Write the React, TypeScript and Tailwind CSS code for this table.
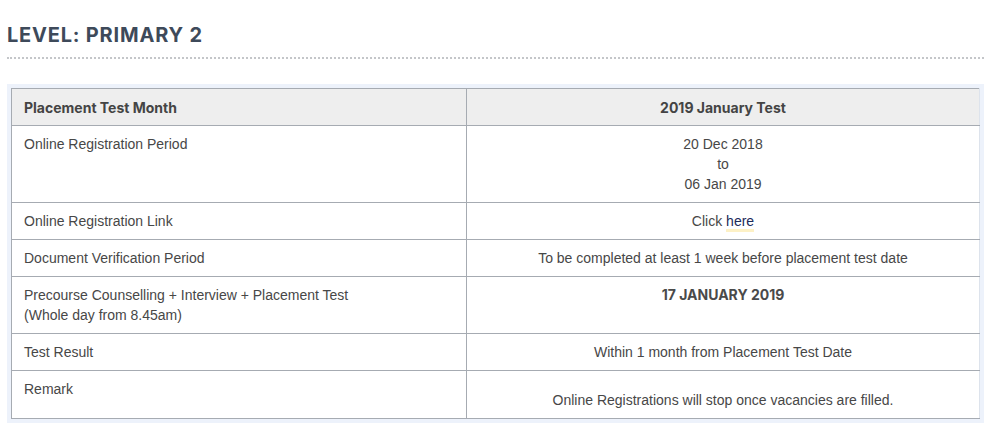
export default function App() {
  const rows = [
    { label: ['Online Registration Period'], value: <>20 Dec 2018<br />to<br />06 Jan 2019</> },
    {
      label: ['Online Registration Link'],
      value: (
        <>
          Click <a className="text-[#1c2b5a] border-b-[3px] border-[#fdf1c6]">here</a>
        </>
      ),
    },
    { label: ['Document Verification Period'], value: 'To be completed at least 1 week before placement test date' },
    {
      label: ['Precourse Counselling + Interview + Placement Test', '(Whole day from 8.45am)'],
      value: <span className="font-['Inter',sans-serif] font-bold text-[14px] text-[#4a4a4a]">17 JANUARY 2019</span>,
    },
    { label: ['Test Result'], value: 'Within 1 month from Placement Test Date' },
    { label: ['Remark'], value: <div className="mt-[11px]">Online Registrations will stop once vacancies are filled.</div> },
  ]

  return (
    <div className="min-h-screen bg-white pl-[7px] pr-[10px] pt-[23px] font-['Liberation_Sans',Arial,sans-serif] text-[14px] text-[#474747]">
      {/* heading */}
      <h2 className="font-['Inter',sans-serif] font-bold text-[20px] leading-[24px] tracking-[0.04em] text-[#3e4a5a]">
        LEVEL: PRIMARY 2
      </h2>
      <div className="mt-[10px] border-b-2 border-dotted border-[#c4c6c9]" />

      {/* table */}
      <div className="mt-[25px] bg-[#edf2fb] p-[4px]">
        <table className="w-full border-collapse bg-white">
          <thead>
            <tr className="bg-[#eeeeee] font-['Inter',sans-serif] font-bold text-[14px] text-[#444]">
              <th className="w-[455px] h-[37px] border border-[#a6abb2] px-[12px] text-left">Placement Test Month</th>
              <th className="h-[37px] border border-[#a6abb2] border-r-[#dde3ec] px-[12px] text-center">2019 January Test</th>
            </tr>
          </thead>
          <tbody>
            {rows.map((r, i) => (
              <tr key={i}>
                <td className="border border-[#a6abb2] px-[12px] pt-[8px] pb-[8px] align-top leading-[20px]">
                  {r.label.map((l, j) => (
                    <div key={j}>{l}</div>
                  ))}
                </td>
                <td className="border border-[#a6abb2] border-r-[#dde3ec] px-[12px] pt-[8px] pb-[8px] align-top text-center leading-[20px]">
                  {r.value}
                </td>
              </tr>
            ))}
          </tbody>
        </table>
      </div>
    </div>
  )
}
